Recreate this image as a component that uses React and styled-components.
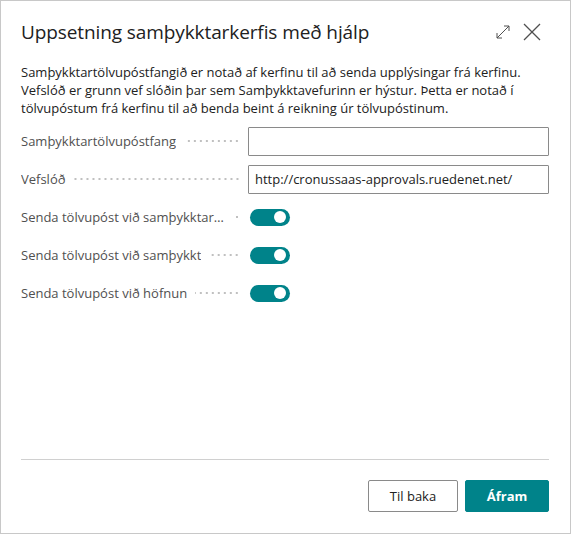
import React from 'react';
import styled, { createGlobalStyle } from 'styled-components';

const Global = createGlobalStyle`
  html, body {
    margin: 0;
    padding: 0;
    background: #ffffff;
  }
  body {
    font-family: "Segoe UI", "Open Sans", "Noto Sans", sans-serif;
    color: #212121;
  }
`;

const Dialog = styled.div`
  box-sizing: border-box;
  width: 571px;
  height: 534px;
  border: 1px solid #c8c8c8;
  background: #fff;
  display: flex;
  flex-direction: column;
  padding: 0 21px 0 20px;
`;

const Header = styled.div`
  display: flex;
  align-items: center;
  justify-content: space-between;
  height: 62px;
`;

const Title = styled.h1`
  margin: 0;
  font-size: 19px;
  font-weight: 400;
  color: #212121;
  letter-spacing: -0.1px;
`;

const HeaderIcons = styled.div`
  display: flex;
  align-items: center;
  gap: 12px;
  margin-right: 8px;
`;

const IconButton = styled.button`
  border: 0;
  background: none;
  padding: 0;
  display: flex;
  color: #505050;
  cursor: pointer;
`;

const Intro = styled.p`
  margin: 0 0 5px;
  font-size: 13px;
  line-height: 18px;
  color: #212121;
`;

const Fields = styled.div`
  display: flex;
  flex-direction: column;
`;

const Row = styled.div`
  display: grid;
  grid-template-columns: 227px 1fr;
  align-items: center;
  height: 38px;
`;

const Label = styled.div`
  display: flex;
  align-items: center;
  font-size: 13px;
  color: #505050;
  overflow: hidden;
  padding-right: 8px;
  white-space: nowrap;
`;

const LabelText = styled.span`
  overflow: hidden;
  text-overflow: ellipsis;
  flex: 0 1 auto;
`;

const Leader = styled.span`
  flex: 1 0 6px;
  margin-left: 8px;
  height: 2px;
  background-image: radial-gradient(circle, #c0c0c0 0.8px, transparent 1px);
  background-size: 6px 2px;
  background-repeat: repeat-x;
  background-position: right center;
`;

const Input = styled.input`
  box-sizing: border-box;
  height: 29px;
  width: 100%;
  border: 1px solid #8a8a8a;
  border-radius: 1px;
  padding: 0 6px;
  font-family: inherit;
  font-size: 13px;
  color: #212121;
  outline: none;
`;

const ToggleCell = styled.div`
  display: flex;
  align-items: center;
`;

const Toggle = styled.span`
  position: relative;
  display: block;
  width: 40px;
  height: 17px;
  border-radius: 9px;
  background: ${({ on }) => (on ? '#00838a' : '#fff')};
  margin-left: 2px;

  &::after {
    content: '';
    position: absolute;
    top: 2.5px;
    right: ${({ on }) => (on ? '4px' : '24px')};
    width: 12px;
    height: 12px;
    border-radius: 50%;
    background: #fff;
  }
`;

const Spacer = styled.div`
  flex: 1;
`;

const Footer = styled.div`
  border-top: 1px solid #d0d0d0;
  display: flex;
  justify-content: flex-end;
  gap: 7px;
  padding: 20px 0 21px;
`;

const Button = styled.button`
  box-sizing: border-box;
  height: 32px;
  min-width: ${({ primary }) => (primary ? '84px' : '90px')};
  padding: 0 18px;
  font-family: inherit;
  font-size: 13px;
  font-weight: ${({ primary }) => (primary ? 700 : 400)};
  border-radius: 2px;
  border: 1px solid ${({ primary }) => (primary ? '#00838a' : '#8a8a8a')};
  background: ${({ primary }) => (primary ? '#00838a' : '#fff')};
  color: ${({ primary }) => (primary ? '#fff' : '#212121')};
  cursor: pointer;
`;

const ExpandIcon = () => (
  <svg width="16" height="16" viewBox="0 0 16 16" fill="none" stroke="currentColor" strokeWidth="1">
    <path d="M2 14 L14 2" />
    <path d="M9 2 H14 V7" />
    <path d="M2 9 V14 H7" />
  </svg>
);

const CloseIcon = () => (
  <svg width="18" height="18" viewBox="0 0 18 18" fill="none" stroke="currentColor" strokeWidth="1.3">
    <path d="M1 1 L17 17" />
    <path d="M17 1 L1 17" />
  </svg>
);

const toggles = [
  'Senda tölvupóst við samþykktarbeiðni',
  'Senda tölvupóst við samþykkt',
  'Senda tölvupóst við höfnun',
];

export default function App() {
  return (
    <>
      <Global />
      <Dialog>
        <Header>
          <Title>Uppsetning samþykktarkerfis með hjálp</Title>
          <HeaderIcons>
            <IconButton aria-label="Stækka"><ExpandIcon /></IconButton>
            <IconButton aria-label="Loka"><CloseIcon /></IconButton>
          </HeaderIcons>
        </Header>
        <Intro>
          Samþykktartölvupóstfangið er notað af kerfinu til að senda upplýsingar frá kerfinu.
          Vefslóð er grunn vef slóðin þar sem Samþykktavefurinn er hýstur. Þetta er notað í
          tölvupóstum frá kerfinu til að benda beint á reikning úr tölvupóstinum.
        </Intro>
        <Fields>
          <Row>
            <Label><LabelText>Samþykktartölvupóstfang</LabelText><Leader /></Label>
            <Input defaultValue="" />
          </Row>
          <Row>
            <Label><LabelText>Vefslóð</LabelText><Leader /></Label>
            <Input defaultValue="http://cronussaas-approvals.ruedenet.net/" />
          </Row>
          {toggles.map((t) => (
            <Row key={t}>
              <Label><LabelText>{t}</LabelText><Leader /></Label>
              <ToggleCell><Toggle on /></ToggleCell>
            </Row>
          ))}
        </Fields>
        <Spacer />
        <Footer>
          <Button>Til baka</Button>
          <Button primary>Áfram</Button>
        </Footer>
      </Dialog>
    </>
  );
}
